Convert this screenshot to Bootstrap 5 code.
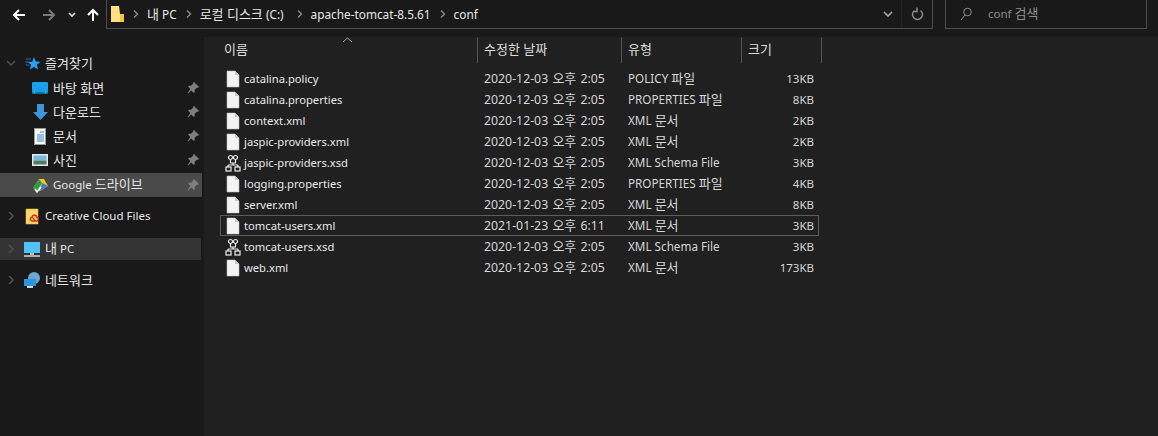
<!DOCTYPE html>
<html lang="ko">
<head>
  <meta charset="UTF-8">
  <meta name="viewport" content="width=device-width, initial-scale=1.0">
  <title>conf</title>
  <link href="https://cdn.jsdelivr.net/npm/bootstrap@5.3.0/dist/css/bootstrap.min.css" rel="stylesheet">
  <style>
    html, body { height: 100%; }
    body {
      background: #191919;
      color: #e6e6e6;
      font-family: "Noto Sans", "Noto Sans CJK KR", sans-serif;
      font-size: 11.5px;
      line-height: 16px;
      overflow: hidden;
    }
    .ko { font-size: 13px; line-height: 1; }
    .top-strip { height: 37px; }
    .nav-btns { width: 106px; height: 30px; padding-left: 12px; }
    .back-btn { margin-right: 16px; }
    .fwd-btn { margin-right: 12px; }
    .down-btn { margin-right: 10px; }
    .addr-box { width: 827px; height: 30px; margin-top: -1px; border: 1px solid #4d4d4d; border-top-color: #333; background: #191919; font-size: 11.8px; }
    .crumb-sep { width: 23px; height: 10px; }
    .crumb-wide { margin-right: 4px; }
    .addr-tail { width: 31px; border-left: 1px solid #222; }
    .search-box { width: 202px; height: 30px; margin: -1px 0 0 12px; border: 1px solid #4d4d4d; border-top-color: #333; color: #8c8c8c; padding-left: 14px; }
    .main-area { height: 399px; }
    .side-pane { width: 204px; padding-top: 14px; }
    .side-row { height: 24px; margin-right: 2px; }
    .side-row.sub { padding-left: 32px; }
    .side-row.top { padding-left: 6px; margin-top: 7px; }
    .side-row.first { margin-top: 0; margin-bottom: 1px; }
    .side-row.picked { background: #4a4a4a; margin-top: 1px; }
    .side-row.here { background: #333; height: 22px; margin: 10px 3px 0 0; }
    .side-row.after-here { margin-top: 8px; }
    .side-ico { width: 17px; height: 17px; margin-right: 4px; flex: none; }
    .twist { width: 10px; height: 10px; margin-right: 8px; flex: none; }
    .pin { width: 12px; height: 12px; margin-right: 3px; }
    .file-pane { background: #202020; }
    .col-head { height: 26px; color: #dcdcdc; position: relative; }
    .head-cell { height: 26px; border-right: 1px solid #555; padding-left: 6px; padding-bottom: 2px; }
    .head-name { width: 274px; padding-left: 20px; }
    .head-date { width: 144px; }
    .head-type { width: 120px; }
    .head-size { width: 80px; }
    .sort-caret { position: absolute; left: 138px; top: 0; width: 11px; height: 6px; }
    .file-list { padding: 5px 0 0 16px; width: 615px; }
    .file-row { display: grid; grid-template-columns: 263px 144px 118px 1fr; height: 21px; align-items: center; border: 1px solid transparent; }
    .file-row.focused { border-color: #5c5c5c; }
    .file-name { display: flex; align-items: center; padding-left: 4px; color: #e8e8e8; font-size: 11.2px; }
    .file-ico { width: 16px; height: 18px; margin-right: 3px; flex: none; }
    .file-size { text-align: right; padding-right: 4px; }
    .file-meta { color: #d6d6d6; }
    .file-date { font-size: 12.3px; word-spacing: 1px; }
    .file-type { font-size: 11.7px; padding-bottom: 2px; }
  </style>
</head>
<body>
  <svg width="0" height="0" class="d-block">
    <symbol id="doc" viewBox="0 0 16 18"><path d="M2 1h8l4 4v12H2z" fill="#f4f4f4" stroke="#bdbdbd" stroke-width=".6"/><path d="M10 1v4h4" fill="#c9c9c9"/></symbol>
    <symbol id="schema" viewBox="0 0 16 18"><g fill="none" stroke="#efefef" stroke-width="1.2"><circle cx="5.500" cy="3.500" r="2"/><circle cx="10.500" cy="3.500" r="2"/><path d="M5.500 6v3h5V6M8 9v2M3 11h10M3 11v2M13 11v2"/><rect x="1" y="13" width="5" height="4"/><rect x="10" y="13" width="5" height="4"/></g></symbol>
    <symbol id="chev" viewBox="0 0 10 10"><path d="M3 1l4 4-4 4" fill="none" stroke="#4f4f4f" stroke-width="1.500"/></symbol>
    <symbol id="crumb" viewBox="0 0 23 10"><path d="M10 1.500l3.500 3.500L10 8.500" fill="none" stroke="#8a8a8a" stroke-width="1.400"/></symbol>
    <symbol id="pinned" viewBox="0 0 12 12"><path d="M7 0l5 5-1 1-1-.4-2.400 2.400.2 2-1 1-2.500-2.500L1 11.500l-.5-.5 3-3.900L1 4.600l1-1 2 .2L6.400 1.400 6 1z" fill="#7e7e7e"/></symbol>
  </svg>

  <div class="top-strip d-flex">
    <div class="nav-btns d-flex align-items-center">
      <svg width="14" height="14" viewBox="0 0 14 14" class="back-btn"><path d="M13 7H2M7 2L2 7l5 5" fill="none" stroke="#fff" stroke-width="2"/></svg>
      <svg width="14" height="14" viewBox="0 0 14 14" class="fwd-btn"><path d="M1 7h11M7 2l5 5-5 5" fill="none" stroke="#7a7a7a" stroke-width="2"/></svg>
      <svg width="8" height="6" viewBox="0 0 8 6" class="down-btn"><path d="M1 1l3 3 3-3" fill="none" stroke="#ddd" stroke-width="1.600"/></svg>
      <svg width="14" height="14" viewBox="0 0 14 14"><path d="M7 13V2M2 7l5-5 5 5" fill="none" stroke="#fff" stroke-width="2"/></svg>
    </div>
    <div class="addr-box d-flex align-items-center">
      <svg width="13" height="16" viewBox="0 0 13 16" class="ms-1"><path d="M0 0h8l1 8h4v8H0z" fill="#ffe27f"/><path d="M9 8h4v8H9z" fill="#f2c14e"/></svg>
      <svg class="crumb-sep"><use href="#crumb"/></svg><span><span class="ko">내</span> PC</span>
      <svg class="crumb-sep"><use href="#crumb"/></svg><span class="crumb-wide"><span class="ko">로컬 디스크</span> (C:)</span>
      <svg class="crumb-sep"><use href="#crumb"/></svg><span>apache-tomcat-8.5.61</span>
      <svg class="crumb-sep"><use href="#crumb"/></svg><span>conf</span>
      <svg width="10" height="6" viewBox="0 0 10 6" class="ms-auto me-2"><path d="M1 1l4 4 4-4" fill="none" stroke="#aaa" stroke-width="1.600"/></svg>
      <div class="addr-tail h-100 d-flex align-items-center justify-content-center">
        <svg width="13" height="14" viewBox="0 0 13 14"><path d="M9.500 3.500a5 5 0 1 1-6 0M6 .5v4H3" fill="none" stroke="#8a8a8a" stroke-width="1.500"/></svg>
      </div>
    </div>
    <div class="search-box d-flex align-items-center">
      <svg width="12" height="14" viewBox="0 0 12 14" class="me-3"><circle cx="7.500" cy="5" r="3.800" fill="none" stroke="#8c8c8c"/><path d="M5 8l-4 5" stroke="#8c8c8c"/></svg>
      <span>conf <span class="ko">검색</span></span>
    </div>
  </div>

  <div class="main-area d-flex">
    <div class="side-pane">
      <div class="side-row top first d-flex align-items-center">
        <svg class="twist"><use href="#chev" transform="rotate(90 5 5)"/></svg>
        <svg class="side-ico" viewBox="0 0 17 17"><path d="M10 2l1.800 4.500 4.700.3-3.600 3 1.200 4.700L10 12l-4.100 2.500L7 9.800 3.500 6.800h4.700z" fill="#2a9df4"/><path d="M2 4h5M1 7h3M2 10h3" stroke="#1b76b8"/></svg>
        <span class="ko">즐겨찾기</span>
      </div>
      <div class="side-row sub d-flex align-items-center">
        <svg class="side-ico" viewBox="0 0 17 17"><rect y="2" width="16" height="12" rx="1" fill="#19a0ec"/><path d="M0 12h16v2H0z" fill="#0b6fb8"/><path d="M2 12.500h1M13 12.500h1" stroke="#dff"/></svg>
        <span class="ko">바탕 화면</span>
        <svg class="pin ms-auto"><use href="#pinned"/></svg>
      </div>
      <div class="side-row sub d-flex align-items-center">
        <svg class="side-ico" viewBox="0 0 17 17"><path d="M5 0h7v8h4l-7.500 8L1 8h4z" fill="#3a96dd"/></svg>
        <span class="ko">다운로드</span>
        <svg class="pin ms-auto"><use href="#pinned"/></svg>
      </div>
      <div class="side-row sub d-flex align-items-center">
        <svg class="side-ico" viewBox="0 0 17 17"><rect x="2.500" y=".5" width="11" height="16" fill="#fafafa" stroke="#999"/><path d="M8 4h4M5 7h7M5 9h7M5 11h7M5 13h7" stroke="#2f86d0"/></svg>
        <span class="ko">문서</span>
        <svg class="pin ms-auto"><use href="#pinned"/></svg>
      </div>
      <div class="side-row sub d-flex align-items-center">
        <svg class="side-ico" viewBox="0 0 17 17"><rect y="2" width="16" height="12" fill="#e8e8e8"/><rect x="1.500" y="3.500" width="13" height="5" fill="#7db7dc"/><rect x="1.500" y="8.500" width="13" height="4" fill="#4e7a68"/></svg>
        <span class="ko">사진</span>
        <svg class="pin ms-auto"><use href="#pinned"/></svg>
      </div>
      <div class="side-row sub picked d-flex align-items-center">
        <svg class="side-ico" viewBox="0 0 17 17"><path d="M1 11l6-9h5l4 7-8 5z" fill="#f5c518"/><path d="M1 11l6-9 3 4-5 8z" fill="#2a9d4a"/><path d="M10 6l6 3-8 5z" fill="#3b7de0"/><path d="M3 12l2 3 4-5" fill="none" stroke="#fff" stroke-width="1.500"/></svg>
        <span>Google <span class="ko">드라이브</span></span>
        <svg class="pin ms-auto"><use href="#pinned"/></svg>
      </div>
      <div class="side-row top d-flex align-items-center">
        <svg class="twist"><use href="#chev"/></svg>
        <svg class="side-ico" viewBox="0 0 17 17"><path d="M2 1h12v15H2z" fill="#fbd76d" stroke="#e5b53e" stroke-width=".6"/><path d="M8 10a2.500 2.500 0 0 1 5-.5c1.500 0 2 3 0 3.500H8c-2 0-2.500-3-.5-3.500 2-.5 3 3 4 3.500" fill="none" stroke="#d8291f" stroke-width="1.300"/></svg>
        <span>Creative Cloud Files</span>
      </div>
      <div class="side-row top here d-flex align-items-center">
        <svg class="twist"><use href="#chev"/></svg>
        <svg class="side-ico" viewBox="0 0 17 17"><rect y="1" width="16" height="11" fill="#4fc3f7"/><rect x="6" y="12" width="4" height="2" fill="#bbb"/><rect y="14" width="16" height="2" fill="#9fb3bd"/></svg>
        <span><span class="ko">내</span> PC</span>
      </div>
      <div class="side-row top after-here d-flex align-items-center">
        <svg class="twist"><use href="#chev"/></svg>
        <svg class="side-ico" viewBox="0 0 17 17"><circle cx="10" cy="6" r="6" fill="#6aa7d6"/><rect y="7" width="12" height="7" fill="#2b95e0"/><rect x="3" y="14" width="6" height="2" fill="#cfd8dc"/></svg>
        <span class="ko">네트워크</span>
      </div>
    </div>

    <div class="file-pane flex-grow-1">
      <div class="col-head d-flex align-items-center">
        <svg class="sort-caret" viewBox="0 0 11 6"><path d="M1 5l4.500-4L10 5" fill="none" stroke="#aaa"/></svg>
        <div class="head-cell head-name d-flex align-items-center ko">이름</div>
        <div class="head-cell head-date d-flex align-items-center ko">수정한 날짜</div>
        <div class="head-cell head-type d-flex align-items-center ko">유형</div>
        <div class="head-cell head-size d-flex align-items-center ko">크기</div>
      </div>
      <div class="file-list" id="fileList"></div>
    </div>
  </div>

  <script>
    const files = [
      ["catalina.policy", "2020-12-03 오후 2:05", "POLICY 파일", "13KB", "doc"],
      ["catalina.properties", "2020-12-03 오후 2:05", "PROPERTIES 파일", "8KB", "doc"],
      ["context.xml", "2020-12-03 오후 2:05", "XML 문서", "2KB", "doc"],
      ["jaspic-providers.xml", "2020-12-03 오후 2:05", "XML 문서", "2KB", "doc"],
      ["jaspic-providers.xsd", "2020-12-03 오후 2:05", "XML Schema File", "3KB", "schema"],
      ["logging.properties", "2020-12-03 오후 2:05", "PROPERTIES 파일", "4KB", "doc"],
      ["server.xml", "2020-12-03 오후 2:05", "XML 문서", "8KB", "doc"],
      ["tomcat-users.xml", "2021-01-23 오후 6:11", "XML 문서", "3KB", "doc"],
      ["tomcat-users.xsd", "2020-12-03 오후 2:05", "XML Schema File", "3KB", "schema"],
      ["web.xml", "2020-12-03 오후 2:05", "XML 문서", "173KB", "doc"]
    ];
    // hangul runs get the larger size, the rest of the cell stays at the latin size
    const ko = s => s.replace(/[가-힣]+/g, m => `<span class="ko">${m}</span>`);
    document.getElementById("fileList").innerHTML = files.map((f, i) => `
      <div class="file-row ${i === 7 ? "focused" : ""}">
        <div class="file-name"><svg class="file-ico"><use href="#${f[4]}"/></svg>${f[0]}</div>
        <div class="file-meta file-date">${ko(f[1])}</div>
        <div class="file-meta file-type">${ko(f[2])}</div>
        <div class="file-meta file-size">${f[3]}</div>
      </div>`).join("");
  </script>
  <script src="https://cdn.jsdelivr.net/npm/bootstrap@5.3.0/dist/js/bootstrap.bundle.min.js"></script>
</body>
</html>
